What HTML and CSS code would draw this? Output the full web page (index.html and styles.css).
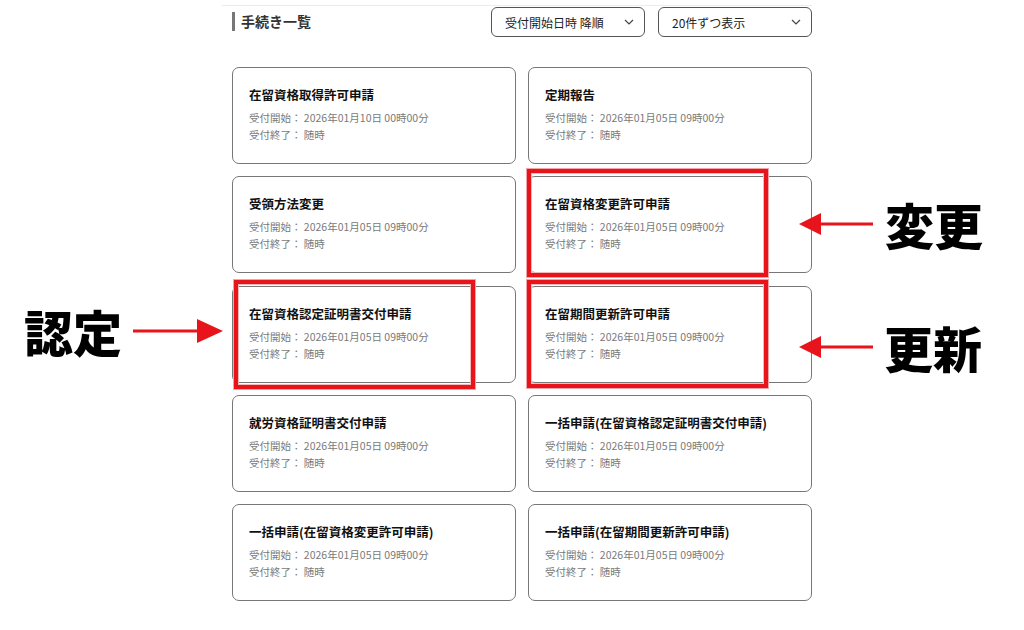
FILE: index.html
```html
<!DOCTYPE html>
<html lang="ja">
<head>
    <meta charset="UTF-8">
    <meta name="viewport" content="width=device-width, initial-scale=1.0">
    <title>手続き一覧</title>
    <link rel="stylesheet" href="styles.css">
</head>
<body>
    <div class="page">
        <div class="topline"></div>
        <div class="container">
            <div class="list-header">
                <h1 class="list-title">手続き一覧</h1>
                <div class="controls">
                    <div class="select sort">
                        <span>受付開始日時 降順</span>
                        <svg class="chevron" width="10" height="6" viewBox="0 0 10 6"><path d="M1 1l4 4 4-4" fill="none" stroke="#444" stroke-width="1.2"/></svg>
                    </div>
                    <div class="select count">
                        <span>20件ずつ表示</span>
                        <svg class="chevron" width="10" height="6" viewBox="0 0 10 6"><path d="M1 1l4 4 4-4" fill="none" stroke="#444" stroke-width="1.2"/></svg>
                    </div>
                </div>
            </div>

            <div class="cards">
                <div class="card">
                    <h2>在留資格取得許可申請</h2>
                    <p>受付開始： 2026年01月10日 00時00分</p>
                    <p>受付終了： 随時</p>
                </div>
                <div class="card">
                    <h2>定期報告</h2>
                    <p>受付開始： 2026年01月05日 09時00分</p>
                    <p>受付終了： 随時</p>
                </div>
                <div class="card">
                    <h2>受領方法変更</h2>
                    <p>受付開始： 2026年01月05日 09時00分</p>
                    <p>受付終了： 随時</p>
                </div>
                <div class="card">
                    <div class="highlight hl-henko"></div>
                    <h2>在留資格変更許可申請</h2>
                    <p>受付開始： 2026年01月05日 09時00分</p>
                    <p>受付終了： 随時</p>
                </div>
                <div class="card">
                    <div class="highlight hl-nintei"></div>
                    <h2>在留資格認定証明書交付申請</h2>
                    <p>受付開始： 2026年01月05日 09時00分</p>
                    <p>受付終了： 随時</p>
                </div>
                <div class="card">
                    <div class="highlight hl-koshin"></div>
                    <h2>在留期間更新許可申請</h2>
                    <p>受付開始： 2026年01月05日 09時00分</p>
                    <p>受付終了： 随時</p>
                </div>
                <div class="card">
                    <h2>就労資格証明書交付申請</h2>
                    <p>受付開始： 2026年01月05日 09時00分</p>
                    <p>受付終了： 随時</p>
                </div>
                <div class="card">
                    <h2>一括申請(在留資格認定証明書交付申請)</h2>
                    <p>受付開始： 2026年01月05日 09時00分</p>
                    <p>受付終了： 随時</p>
                </div>
                <div class="card">
                    <h2>一括申請(在留資格変更許可申請)</h2>
                    <p>受付開始： 2026年01月05日 09時00分</p>
                    <p>受付終了： 随時</p>
                </div>
                <div class="card">
                    <h2>一括申請(在留期間更新許可申請)</h2>
                    <p>受付開始： 2026年01月05日 09時00分</p>
                    <p>受付終了： 随時</p>
                </div>
            </div>
        </div>

        <!-- annotations -->
        <div class="note note-nintei">
            <span class="note-label">認定</span>
            <svg class="arrow" width="92" height="26" viewBox="0 0 92 26"><path d="M0 13h66" stroke="#e8141b" stroke-width="3"/><path d="M64 1l26 12-26 12z" fill="#e8141b"/></svg>
        </div>
        <div class="note note-henko">
            <svg class="arrow" width="74" height="24" viewBox="0 0 74 24"><path d="M20 12h54" stroke="#e8141b" stroke-width="3"/><path d="M0 12l22-11v22z" fill="#e8141b"/></svg>
            <span class="note-label">変更</span>
        </div>
        <div class="note note-koshin">
            <svg class="arrow" width="74" height="24" viewBox="0 0 74 24"><path d="M20 12h54" stroke="#e8141b" stroke-width="3"/><path d="M0 12l22-11v22z" fill="#e8141b"/></svg>
            <span class="note-label">更新</span>
        </div>
    </div>
</body>
</html>
```

FILE: styles.css
```css
body {
    margin: 0;
    font-family: "Noto Sans CJK JP", "Noto Sans", sans-serif;
    background: #fff;
    color: #111;
}

.page {
    position: relative;
    width: 1024px;
    height: 630px;
    overflow: hidden;
}

.topline {
    margin-left: 222px;
    width: 590px;
    height: 5px;
    border-bottom: 1px solid #ececec;
}

.container {
    margin-left: 232px;
    width: 580px;
}

.list-header {
    display: flex;
    justify-content: space-between;
    align-items: flex-start;
    height: 61px;
}

.list-title {
    margin: 6px 0 0;
    padding-left: 6px;
    border-left: 3px solid #777;
    font-size: 14px;
    font-weight: bold;
    line-height: 19px;
    color: #333;
}

.controls {
    display: flex;
    gap: 13px;
    margin-top: 1px;
}

.select {
    display: flex;
    align-items: center;
    justify-content: space-between;
    box-sizing: border-box;
    height: 30px;
    padding: 0 10px 0 13px;
    border: 1px solid #555;
    border-radius: 6px;
    font-size: 12px;
    color: #222;
}

.sort { width: 154px; }
.count { width: 154px; }

.cards {
    display: grid;
    grid-template-columns: 284px 284px;
    column-gap: 12px;
    row-gap: 12.25px;
}

.card {
    position: relative;
    box-sizing: border-box;
    height: 97px;
    padding: 18px 16px 0;
    border: 1px solid #777;
    border-radius: 7px;
}

.card h2 {
    margin: 0 0 5px;
    font-size: 12.5px;
    font-weight: bold;
    line-height: 18px;
    color: #111;
    white-space: nowrap;
}

.card p {
    margin: 0;
    font-size: 10.5px;
    line-height: 17px;
    color: #7a7a7a;
}

.highlight {
    position: absolute;
    width: 233px;
    height: 100px;
    border: 4px solid #e8141b;
    outline: 1px solid #f4a3a6;
    outline-offset: 0;
    box-shadow: inset 0 0 0 1px #f7b8ba;
}

.hl-henko {
    left: -2px;
    top: -8px;
}

.hl-nintei {
    left: 1px;
    top: -7px;
    height: 101px;
}

.hl-koshin {
    left: -2px;
    top: -7px;
}

.note {
    position: absolute;
    display: flex;
    align-items: center;
}

.note-label {
    font-size: 49px;
    font-weight: 900;
    line-height: 1;
    color: #000;
}

.note-nintei {
    left: 24px;
    top: 306px;
    gap: 11px;
}

.note-henko {
    left: 799px;
    top: 199px;
    gap: 12px;
}

.note-koshin {
    left: 799px;
    top: 322px;
    gap: 11px;
}
```
